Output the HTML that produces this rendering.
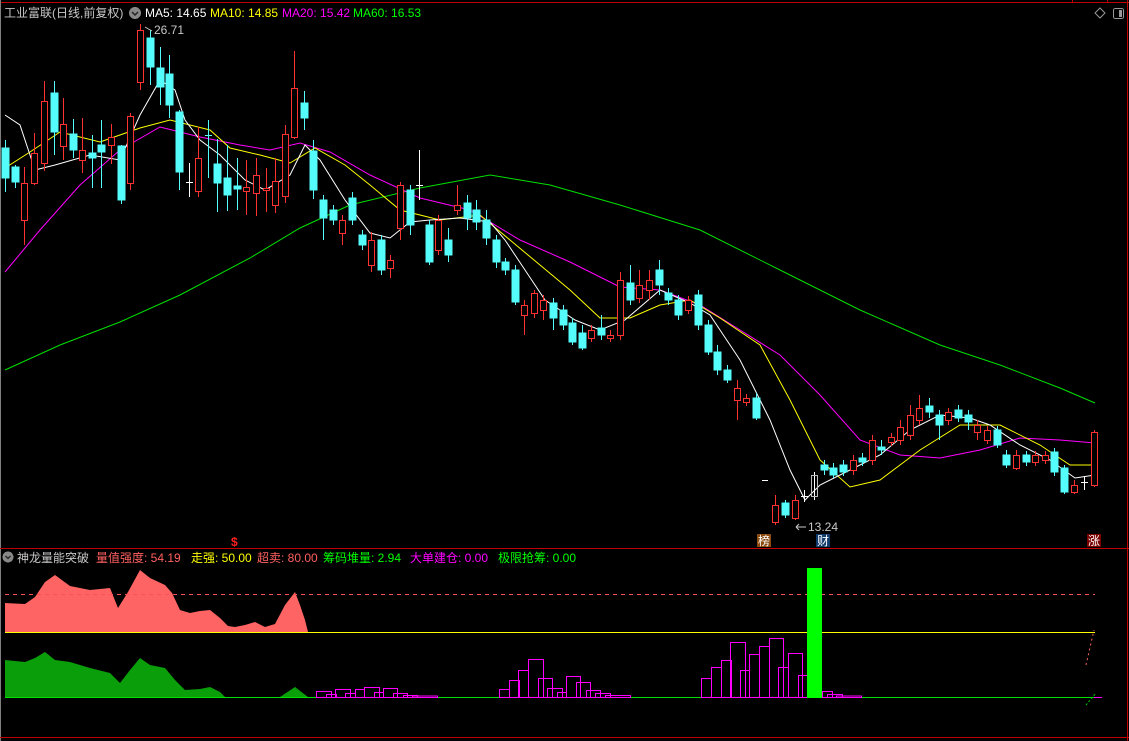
<!DOCTYPE html>
<html><head><meta charset="utf-8"><style>
html,body{margin:0;padding:0;background:#000;width:1129px;height:741px;overflow:hidden}
svg{display:block}
text{font-family:"Liberation Sans","Noto Sans CJK SC",sans-serif;font-size:12px}
</style></head><body>
<svg width="1129" height="741" viewBox="0 0 1129 741" xmlns="http://www.w3.org/2000/svg" shape-rendering="crispEdges">
<rect width="1129" height="741" fill="#000"/>
<line x1="0" y1="2.5" x2="1129" y2="2.5" stroke="#c00000"/>
<line x1="1072.5" y1="0" x2="1072.5" y2="3" stroke="#c00000"/>
<line x1="1107.5" y1="0" x2="1107.5" y2="3" stroke="#c00000"/>
<line x1="1127.5" y1="0" x2="1127.5" y2="741" stroke="#c00000"/>
<line x1="0.5" y1="0" x2="0.5" y2="741" stroke="#808080"/>
<line x1="0" y1="548.5" x2="1129" y2="548.5" stroke="#c00000"/>
<line x1="0" y1="737.5" x2="1129" y2="737.5" stroke="#c00000"/>

<text x="4" y="17" fill="#c8c8c8" font-size="13">工业富联(日线,前复权)</text>
<circle cx="135" cy="13" r="6" fill="#888"/><path d="M132 12 L135 15 L138 12" stroke="#222" fill="none" stroke-width="1.5" shape-rendering="auto"/>
<text x="145" y="17" fill="#ffffff">MA5: 14.65</text>
<text x="210" y="17" fill="#ffff00">MA10: 14.85</text>
<text x="282" y="17" fill="#ff00ff">MA20: 15.42</text>
<text x="353" y="17" fill="#00ff00">MA60: 16.53</text>
<path d="M1100 8 L1105 13 L1100 18 L1095 13 Z" stroke="#999" fill="none" shape-rendering="auto"/>
<rect x="1113.5" y="8.5" width="10" height="10" rx="2" stroke="#999" fill="none"/><rect x="1119" y="10" width="3" height="7" fill="#999"/>

<g fill="none" shape-rendering="auto">
<polyline stroke="#00e000" points="5,370 60,345 120,322 180,295 250,258 300,228 350,205 420,188 490,175 550,185 620,205 700,230 780,270 860,310 940,345 1000,365 1060,388 1095,403"/>
<polyline stroke="#ff00ff" points="5,272 40,230 80,185 120,150 160,127 200,137 240,145 270,150 300,143 330,152 370,175 420,198 470,210 520,240 570,262 620,287 660,290 700,305 740,330 780,355 820,395 860,440 900,455 940,458 980,450 1020,438 1060,440 1095,443"/>
<polyline stroke="#ffff00" points="5,168 30,152 60,132 100,142 140,128 170,120 210,130 230,148 260,155 290,163 315,148 345,165 370,185 400,210 440,220 480,215 510,240 540,265 570,290 600,318 630,318 660,305 690,300 720,318 760,345 790,400 820,460 850,487 880,480 920,450 960,425 1000,425 1040,445 1070,465 1095,465"/>
<polyline stroke="#ffffff" points="5,115 20,125 35,170 55,165 90,155 120,160 140,115 160,80 175,90 185,120 200,140 220,155 245,180 265,190 290,175 305,145 320,160 345,200 370,233 390,238 410,222 430,220 460,218 490,222 505,240 525,270 545,300 575,320 600,330 625,320 660,290 690,303 710,315 740,360 770,420 790,470 805,500 820,485 850,470 880,455 910,430 940,415 970,418 990,425 1020,445 1050,460 1075,478 1095,475"/>
</g>

<g stroke="#54fcfc" fill="#54fcfc">
<line x1="5.5" y1="140" x2="5.5" y2="192"/><rect x="2" y="148" width="7" height="30"/>
<line x1="15.5" y1="165" x2="15.5" y2="188"/><rect x="12" y="167" width="7" height="15"/>
<line x1="54.5" y1="81" x2="54.5" y2="155"/><rect x="51" y="93" width="7" height="39"/>
<line x1="73.5" y1="119" x2="73.5" y2="158"/><rect x="70" y="134" width="7" height="16"/>
<line x1="92.5" y1="135" x2="92.5" y2="188"/><rect x="89" y="153" width="7" height="5"/>
<line x1="101.5" y1="120" x2="101.5" y2="188"/><rect x="98" y="145" width="7" height="7"/>
<line x1="121.5" y1="145" x2="121.5" y2="204"/><rect x="118" y="146" width="7" height="54"/>
<line x1="150.5" y1="30" x2="150.5" y2="85"/><rect x="147" y="38" width="7" height="29"/>
<line x1="160.5" y1="47" x2="160.5" y2="105"/><rect x="157" y="68" width="7" height="19"/>
<line x1="169.5" y1="55" x2="169.5" y2="118"/><rect x="166" y="74" width="7" height="31"/>
<line x1="179.5" y1="110" x2="179.5" y2="190"/><rect x="176" y="112" width="7" height="60"/>
<line x1="208.5" y1="120" x2="208.5" y2="178"/><line x1="205" y1="135.5" x2="212" y2="135.5"/>
<line x1="217.5" y1="139" x2="217.5" y2="212"/><rect x="214" y="164" width="7" height="19"/>
<line x1="227.5" y1="145" x2="227.5" y2="211"/><rect x="224" y="178" width="7" height="17"/>
<line x1="237.5" y1="158" x2="237.5" y2="210"/><rect x="234" y="186" width="7" height="3"/>
<line x1="304.5" y1="91" x2="304.5" y2="130"/><rect x="301" y="103" width="7" height="15"/>
<line x1="313.5" y1="140" x2="313.5" y2="199"/><rect x="310" y="151" width="7" height="39"/>
<line x1="323.5" y1="195" x2="323.5" y2="240"/><rect x="320" y="200" width="7" height="18"/>
<line x1="333.5" y1="205" x2="333.5" y2="225"/><rect x="330" y="210" width="7" height="10"/>
<line x1="352.5" y1="192" x2="352.5" y2="225"/><rect x="349" y="198" width="7" height="22"/>
<line x1="362.5" y1="230" x2="362.5" y2="250"/><rect x="359" y="235" width="7" height="10"/>
<line x1="381.5" y1="235" x2="381.5" y2="275"/><rect x="378" y="240" width="7" height="30"/>
<line x1="410.5" y1="185" x2="410.5" y2="235"/><rect x="407" y="190" width="7" height="35"/>
<line x1="429.5" y1="220" x2="429.5" y2="265"/><rect x="426" y="225" width="7" height="37"/>
<line x1="448.5" y1="228" x2="448.5" y2="262"/><rect x="445" y="240" width="7" height="15"/>
<line x1="467.5" y1="195" x2="467.5" y2="230"/><rect x="464" y="203" width="7" height="15"/>
<line x1="476.5" y1="200" x2="476.5" y2="230"/><rect x="473" y="210" width="7" height="12"/>
<line x1="486.5" y1="210" x2="486.5" y2="245"/><rect x="483" y="220" width="7" height="18"/>
<line x1="496.5" y1="235" x2="496.5" y2="268"/><rect x="493" y="240" width="7" height="22"/>
<line x1="505.5" y1="258" x2="505.5" y2="275"/><rect x="502" y="262" width="7" height="8"/>
<line x1="515.5" y1="265" x2="515.5" y2="305"/><rect x="512" y="270" width="7" height="32"/>
<line x1="553.5" y1="298" x2="553.5" y2="330"/><rect x="550" y="303" width="7" height="15"/>
<line x1="563.5" y1="305" x2="563.5" y2="330"/><rect x="560" y="310" width="7" height="15"/>
<line x1="572.5" y1="318" x2="572.5" y2="345"/><rect x="569" y="323" width="7" height="19"/>
<line x1="582.5" y1="325" x2="582.5" y2="350"/><rect x="579" y="333" width="7" height="15"/>
<line x1="601.5" y1="315" x2="601.5" y2="340"/><rect x="598" y="328" width="7" height="7"/>
<line x1="630.5" y1="265" x2="630.5" y2="305"/><rect x="627" y="283" width="7" height="17"/>
<line x1="659.5" y1="260" x2="659.5" y2="295"/><rect x="656" y="270" width="7" height="15"/>
<line x1="668.5" y1="288" x2="668.5" y2="305"/><rect x="665" y="293" width="7" height="7"/>
<line x1="678.5" y1="295" x2="678.5" y2="320"/><rect x="675" y="300" width="7" height="15"/>
<line x1="698.5" y1="290" x2="698.5" y2="330"/><rect x="695" y="295" width="7" height="30"/>
<line x1="708.5" y1="320" x2="708.5" y2="355"/><rect x="705" y="325" width="7" height="27"/>
<line x1="717.5" y1="345" x2="717.5" y2="375"/><rect x="714" y="352" width="7" height="18"/>
<line x1="727.5" y1="365" x2="727.5" y2="383"/><rect x="724" y="370" width="7" height="10"/>
<line x1="756.5" y1="393" x2="756.5" y2="420"/><rect x="753" y="398" width="7" height="20"/>
<line x1="785.5" y1="500" x2="785.5" y2="518"/><rect x="782" y="503" width="7" height="12"/>
<line x1="824.5" y1="460" x2="824.5" y2="475"/><rect x="821" y="465" width="7" height="5"/>
<line x1="833.5" y1="463" x2="833.5" y2="478"/><rect x="830" y="468" width="7" height="7"/>
<line x1="843.5" y1="460" x2="843.5" y2="476"/><rect x="840" y="465" width="7" height="7"/>
<line x1="862.5" y1="453" x2="862.5" y2="466"/><rect x="859" y="458" width="7" height="4"/>
<line x1="881.5" y1="440" x2="881.5" y2="455"/><rect x="878" y="447" width="7" height="3"/>
<line x1="929.5" y1="398" x2="929.5" y2="418"/><rect x="926" y="406" width="7" height="6"/>
<line x1="939.5" y1="410" x2="939.5" y2="440"/><rect x="936" y="415" width="7" height="10"/>
<line x1="958.5" y1="405" x2="958.5" y2="422"/><rect x="955" y="410" width="7" height="8"/>
<line x1="968.5" y1="410" x2="968.5" y2="430"/><rect x="965" y="415" width="7" height="7"/>
<line x1="997.5" y1="426" x2="997.5" y2="448"/><rect x="994" y="430" width="7" height="15"/>
<line x1="1006.5" y1="450" x2="1006.5" y2="468"/><rect x="1003" y="455" width="7" height="10"/>
<line x1="1026.5" y1="451" x2="1026.5" y2="466"/><rect x="1023" y="455" width="7" height="7"/>
<line x1="1054.5" y1="448" x2="1054.5" y2="476"/><rect x="1051" y="452" width="7" height="20"/>
<line x1="1064.5" y1="465" x2="1064.5" y2="494"/><rect x="1061" y="468" width="7" height="24"/>
</g>
<g stroke="#ff3232" fill="#000">
<line x1="24.5" y1="167" x2="24.5" y2="245"/><rect x="21.5" y="183.5" width="6" height="37"/>
<line x1="34.5" y1="133" x2="34.5" y2="185"/><rect x="31.5" y="153.5" width="6" height="30"/>
<line x1="44.5" y1="81" x2="44.5" y2="171"/><rect x="41.5" y="101.5" width="6" height="62"/>
<line x1="63.5" y1="98" x2="63.5" y2="160"/><rect x="60.5" y="124.5" width="6" height="22"/>
<line x1="82.5" y1="118" x2="82.5" y2="173"/><rect x="79.5" y="150.5" width="6" height="10"/>
<line x1="111.5" y1="124" x2="111.5" y2="164"/><rect x="108.5" y="137.5" width="6" height="8"/>
<line x1="130.5" y1="113" x2="130.5" y2="190"/><rect x="127.5" y="116.5" width="6" height="67"/>
<line x1="140.5" y1="24" x2="140.5" y2="90"/><rect x="137.5" y="30.5" width="6" height="52"/>
<line x1="198.5" y1="127" x2="198.5" y2="197"/><rect x="195.5" y="158.5" width="6" height="33"/>
<line x1="246.5" y1="160" x2="246.5" y2="215"/><rect x="243.5" y="187.5" width="6" height="4"/>
<line x1="256.5" y1="158" x2="256.5" y2="216"/><rect x="253.5" y="175.5" width="6" height="18"/>
<line x1="266.5" y1="168" x2="266.5" y2="212"/><rect x="263.5" y="188.5" width="6" height="2"/>
<line x1="275.5" y1="158" x2="275.5" y2="213"/><rect x="272.5" y="181.5" width="6" height="24"/>
<line x1="285.5" y1="125" x2="285.5" y2="203"/><rect x="282.5" y="134.5" width="6" height="62"/>
<line x1="294.5" y1="51" x2="294.5" y2="139"/><rect x="291.5" y="88.5" width="6" height="49"/>
<line x1="342.5" y1="215" x2="342.5" y2="245"/><rect x="339.5" y="220.5" width="6" height="13"/>
<line x1="371.5" y1="232" x2="371.5" y2="272"/><rect x="368.5" y="240.5" width="6" height="25"/>
<line x1="390.5" y1="255" x2="390.5" y2="278"/><rect x="387.5" y="260.5" width="6" height="8"/>
<line x1="400.5" y1="182" x2="400.5" y2="240"/><rect x="397.5" y="185.5" width="6" height="43"/>
<line x1="438.5" y1="215" x2="438.5" y2="255"/><rect x="435.5" y="220.5" width="6" height="30"/>
<line x1="457.5" y1="185" x2="457.5" y2="215"/><rect x="454.5" y="205.5" width="6" height="5"/>
<line x1="524.5" y1="300" x2="524.5" y2="335"/><rect x="521.5" y="305.5" width="6" height="10"/>
<line x1="534.5" y1="290" x2="534.5" y2="318"/><rect x="531.5" y="293.5" width="6" height="20"/>
<line x1="543.5" y1="295" x2="543.5" y2="320"/><rect x="540.5" y="300.5" width="6" height="10"/>
<line x1="591.5" y1="325" x2="591.5" y2="342"/><rect x="588.5" y="330.5" width="6" height="8"/>
<line x1="610.5" y1="330" x2="610.5" y2="342"/><rect x="607.5" y="335.5" width="6" height="3"/>
<line x1="620.5" y1="272" x2="620.5" y2="340"/><rect x="617.5" y="280.5" width="6" height="55"/>
<line x1="639.5" y1="270" x2="639.5" y2="303"/><rect x="636.5" y="285.5" width="6" height="13"/>
<line x1="649.5" y1="270" x2="649.5" y2="300"/><rect x="646.5" y="280.5" width="6" height="10"/>
<line x1="688.5" y1="296" x2="688.5" y2="314"/><rect x="685.5" y="300.5" width="6" height="10"/>
<line x1="737.5" y1="380" x2="737.5" y2="420"/><rect x="734.5" y="388.5" width="6" height="12"/>
<line x1="746.5" y1="394" x2="746.5" y2="406"/><rect x="743.5" y="398.5" width="6" height="4"/>
<line x1="775.5" y1="495" x2="775.5" y2="525"/><rect x="772.5" y="505.5" width="6" height="17"/>
<line x1="795.5" y1="495" x2="795.5" y2="520"/><rect x="792.5" y="500.5" width="6" height="18"/>
<line x1="853.5" y1="455" x2="853.5" y2="475"/><rect x="850.5" y="460.5" width="6" height="10"/>
<line x1="872.5" y1="435" x2="872.5" y2="465"/><rect x="869.5" y="440.5" width="6" height="20"/>
<line x1="891.5" y1="433" x2="891.5" y2="446"/><rect x="888.5" y="437.5" width="6" height="5"/>
<line x1="900.5" y1="420" x2="900.5" y2="445"/><rect x="897.5" y="427.5" width="6" height="13"/>
<line x1="910.5" y1="405" x2="910.5" y2="440"/><rect x="907.5" y="415.5" width="6" height="20"/>
<line x1="919.5" y1="395" x2="919.5" y2="425"/><rect x="916.5" y="408.5" width="6" height="12"/>
<line x1="948.5" y1="408" x2="948.5" y2="425"/><rect x="945.5" y="412.5" width="6" height="8"/>
<line x1="977.5" y1="420" x2="977.5" y2="440"/><rect x="974.5" y="425.5" width="6" height="7"/>
<line x1="987.5" y1="426" x2="987.5" y2="444"/><rect x="984.5" y="430.5" width="6" height="10"/>
<line x1="1016.5" y1="450" x2="1016.5" y2="470"/><rect x="1013.5" y="455.5" width="6" height="13"/>
<line x1="1035.5" y1="451" x2="1035.5" y2="466"/><rect x="1032.5" y="455.5" width="6" height="7"/>
<line x1="1045.5" y1="451" x2="1045.5" y2="464"/><rect x="1042.5" y="455.5" width="6" height="5"/>
<line x1="1074.5" y1="480" x2="1074.5" y2="494"/><rect x="1071.5" y="485.5" width="6" height="7"/>
<line x1="1094.5" y1="430" x2="1094.5" y2="487"/><rect x="1091.5" y="432.5" width="6" height="53"/>
</g>
<g stroke="#ffffff" fill="none">
<line x1="189.5" y1="163" x2="189.5" y2="197"/><line x1="186" y1="182.5" x2="193" y2="182.5"/>
<line x1="419.5" y1="150" x2="419.5" y2="200"/><line x1="416" y1="185.5" x2="423" y2="185.5"/>
<line x1="762" y1="480.5" x2="768" y2="480.5"/>
<line x1="804.5" y1="490" x2="804.5" y2="502"/><line x1="801" y1="496.5" x2="808" y2="496.5"/>
<line x1="814.5" y1="472" x2="814.5" y2="500"/><rect x="811.5" y="475.5" width="6" height="21" stroke="#bbb"/>
<line x1="1084.5" y1="476" x2="1084.5" y2="490"/><line x1="1081" y1="482.5" x2="1088" y2="482.5"/>
</g>
<text x="154" y="34" fill="#c8c8c8">26.71</text>
<path d="M145 27 L152 31" stroke="#c8c8c8" shape-rendering="auto"/>
<text x="808" y="531" fill="#c8c8c8">13.24</text>
<path d="M796 527 L806 527 M796 527 L799 524 M796 527 L799 530" stroke="#c8c8c8" shape-rendering="auto"/>
<text x="231" y="546" fill="#ff2020" font-size="13" font-weight="bold">$</text>
<rect x="757" y="534" width="14" height="13" fill="#8a4a10"/><text x="758" y="545" fill="#fff" font-size="12">榜</text>
<rect x="816" y="534" width="14" height="13" fill="#103a6a"/><text x="817" y="545" fill="#fff" font-size="12">财</text>
<rect x="1087" y="534" width="14" height="13" fill="#7a0000"/><text x="1088" y="545" fill="#fff" font-size="12">涨</text>

<circle cx="8" cy="557" r="5.5" fill="#888"/><path d="M5.5 556 L8 558.5 L10.5 556" stroke="#222" fill="none" stroke-width="1.3" shape-rendering="auto"/>
<text x="17" y="562" fill="#c8c8c8">神龙量能突破</text>
<text x="96" y="562" fill="#ff6060">量值强度: 54.19</text>
<text x="191" y="562" fill="#ffff00">走强: 50.00</text>
<text x="257" y="562" fill="#ff6060">超卖: 80.00</text>
<text x="323" y="562" fill="#00ff00">筹码堆量: 2.94</text>
<text x="410" y="562" fill="#ff00ff">大单建仓: 0.00</text>
<text x="498" y="562" fill="#00ff00">极限抢筹: 0.00</text>

<polygon fill="#ff6464" shape-rendering="auto" points="5,632 5,603 25,604 35,597 45,582 55,575 70,586 90,590 110,588 118,608 128,592 140,570 150,578 165,585 172,593 180,610 190,613 200,611 210,610 220,618 228,626 235,627 245,625 255,622 265,627 275,624 285,605 295,592 300,605 305,620 308,632"/>
<polygon fill="#0a9e0a" shape-rendering="auto" points="5,697 5,660 25,662 35,658 45,652 55,660 70,662 90,668 110,673 120,683 130,670 140,658 150,665 165,668 175,680 185,690 200,689 210,687 220,692 225,697"/>
<polygon fill="#0a9e0a" shape-rendering="auto" points="280,697 295,687 308,697"/>
<line x1="5" y1="594.5" x2="1095" y2="594.5" stroke="#ff5050" stroke-dasharray="4,4"/>
<line x1="5" y1="632.5" x2="1095" y2="632.5" stroke="#ffff00"/>
<line x1="5" y1="697.5" x2="1102" y2="697.5" stroke="#00e000"/>
<g stroke="#ff00ff" fill="none">
<rect x="316.5" y="691.5" width="15" height="6"/><rect x="326.5" y="694.5" width="10" height="3"/><rect x="335.5" y="689.5" width="15" height="8"/><rect x="345.5" y="693.5" width="10" height="4"/><rect x="355.5" y="689.5" width="9" height="8"/><rect x="364.5" y="687.5" width="15" height="10"/><rect x="374.5" y="692.5" width="9" height="5"/><rect x="383.5" y="688.5" width="14" height="9"/><rect x="393.5" y="693.5" width="14" height="4"/><rect x="403.5" y="695.5" width="14" height="2"/><rect x="412.5" y="696" width="25" height="1.5"/>
<rect x="499.5" y="689.5" width="10" height="8"/><rect x="509.5" y="680.5" width="10" height="17"/><rect x="518.5" y="670.5" width="10" height="27"/><rect x="528.5" y="659.5" width="15" height="38"/><rect x="538.5" y="678.5" width="14" height="19"/><rect x="547.5" y="688.5" width="15" height="9"/><rect x="557.5" y="692.5" width="9" height="5"/><rect x="566.5" y="676.5" width="14" height="21"/><rect x="576.5" y="682.5" width="14" height="15"/><rect x="586.5" y="690.5" width="14" height="7"/><rect x="595.5" y="693.5" width="15" height="4"/><rect x="605.5" y="695.5" width="25" height="2"/>
<rect x="701.5" y="678.5" width="10" height="19"/><rect x="711.5" y="667.5" width="10" height="30"/><rect x="721.5" y="660.5" width="10" height="37"/><rect x="730.5" y="642.5" width="15" height="55"/><rect x="740.5" y="670.5" width="9" height="27"/><rect x="749.5" y="654.5" width="10" height="43"/><rect x="759.5" y="646.5" width="10" height="51"/><rect x="769.5" y="638.5" width="14" height="59"/><rect x="778.5" y="667.5" width="10" height="30"/><rect x="788.5" y="653.5" width="14" height="44"/><rect x="798.5" y="675.5" width="9" height="22"/><rect x="822.5" y="691.5" width="10" height="6"/><rect x="827.5" y="694.5" width="15" height="3"/><rect x="836.5" y="696" width="25" height="1.5"/>
</g>
<rect x="807" y="568" width="15" height="130" fill="#00ff00"/>
<path d="M1086 665 L1094 630" stroke="#ff6464" stroke-dasharray="2,3" shape-rendering="auto"/>
<path d="M1086 705 L1096 693" stroke="#00cc00" stroke-dasharray="2,2" shape-rendering="auto"/>
<line x1="1094" y1="697.5" x2="1102" y2="697.5" stroke="#ff00ff"/>
</svg>
</body></html>
